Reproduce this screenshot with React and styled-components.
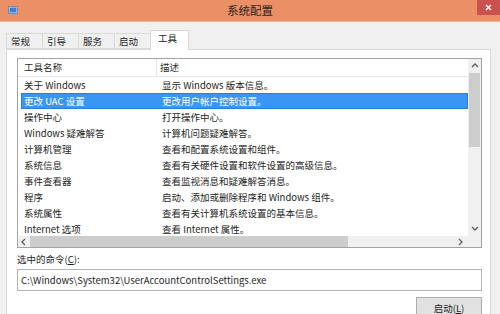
import React from "react";
import styled, { createGlobalStyle } from "styled-components";

const GlobalStyle = createGlobalStyle`
  html, body {
    margin: 0;
    padding: 0;
    background: #f0f0f0;
  }
  body {
    font-family: "Noto Sans CJK SC", "Noto Sans", sans-serif;
    color: #1e1e1e;
  }
`;

const Window = styled.div`
  width: 500px;
  height: 314px;
  overflow: hidden;
  background: #f0f0f0;
  display: flex;
  flex-direction: column;
`;

const TitleBar = styled.div`
  position: relative;
  height: 21px;
  flex: none;
  background: #ea8f66;
  border-bottom: 1px solid #f2b89c;
  display: flex;
  align-items: center;
  justify-content: center;
`;

const AppIcon = styled.svg`
  position: absolute;
  left: 8px;
  top: 6px;
`;

const Title = styled.div`
  font-size: 11.5px;
  color: #2e2420;
  line-height: 21px;
`;

const CloseButton = styled.div`
  position: absolute;
  right: 0;
  top: 0;
  width: 23px;
  height: 15px;
  background: #c9514e;
  display: flex;
  align-items: center;
  justify-content: center;
`;

const Body = styled.div`
  flex: 1;
  display: flex;
  flex-direction: column;
  padding: 8px 9px 0 6px;
  min-height: 0;
`;

const TabStrip = styled.div`
  display: flex;
  align-items: flex-end;
  height: 19px;
  flex: none;
  position: relative;
  z-index: 1;
`;

const Tab = styled.div`
  box-sizing: border-box;
  width: ${({ $active }) => ($active ? "39px" : "37px")};
  height: ${({ $active }) => ($active ? "20px" : "16px")};
  margin-left: ${({ $first }) => ($first ? "0" : "-1px")};
  margin-bottom: ${({ $active }) => ($active ? "-1px" : "0")};
  border: 1px solid #d9d9d9;
  border-bottom: ${({ $active }) => ($active ? "none" : "1px solid #d9d9d9")};
  background: ${({ $active }) => ($active ? "#ffffff" : "#f0f0f0")};
  font-size: 9.5px;
  line-height: ${({ $active }) => ($active ? "15px" : "14px")};
  padding-left: ${({ $active }) => ($active ? "7px" : "4px")};
  color: #1e1e1e;
  position: relative;
  z-index: ${({ $active }) => ($active ? 2 : 1)};
`;

const Panel = styled.div`
  flex: 1;
  background: #ffffff;
  border: 1px solid #d9d9d9;
  padding: 8px 8px 0 10px;
  display: flex;
  flex-direction: column;
`;

const ListView = styled.div`
  box-sizing: border-box;
  height: 190px;
  border: 1px solid #a3a3a3;
  display: grid;
  grid-template-columns: 1fr 13px;
  grid-template-rows: 1fr 11px;
  overflow: hidden;
  flex: none;
`;

const ListContent = styled.div`
  overflow: hidden;
  min-height: 0;
`;

const HeaderRow = styled.div`
  display: flex;
  height: 18px;
  box-sizing: border-box;
  border-bottom: 1px solid #e5e5e5;
  font-size: 9.5px;
  line-height: 17px;
  color: #2e2e2e;
`;

const HeaderCell = styled.div`
  box-sizing: border-box;
  width: ${({ $w }) => $w || "auto"};
  flex: ${({ $w }) => ($w ? "none" : "1")};
  padding-left: ${({ $pl }) => $pl};
  border-right: ${({ $divider }) => ($divider ? "1px solid #e5e5e5" : "none")};
`;

const Row = styled.div`
  display: flex;
  box-sizing: border-box;
  height: 16px;
  margin-left: 3px;
  border: 1px solid ${({ $selected }) => ($selected ? "#2a7fd4" : "transparent")};
  background: ${({ $selected }) => ($selected ? "#3b96f3" : "transparent")};
  color: ${({ $selected }) => ($selected ? "#ffffff" : "#1e1e1e")};
  font-size: 9.5px;
  line-height: 14px;
  white-space: nowrap;
`;

const NameCell = styled.div`
  width: 140px;
  flex: none;
  padding-left: 2px;
  box-sizing: border-box;
`;

const DescCell = styled.div`
  flex: 1;
`;

const VScroll = styled.div`
  background: #f0f0f0;
  display: flex;
  flex-direction: column;
  align-items: center;
`;

const HScroll = styled.div`
  background: #f0f0f0;
  display: flex;
  align-items: center;
`;

const Corner = styled.div`
  background: #f0f0f0;
`;

const ArrowBox = styled.div`
  flex: none;
  width: ${({ $w }) => $w};
  height: ${({ $h }) => $h};
  display: flex;
  align-items: center;
  justify-content: center;
`;

const VThumb = styled.div`
  width: 11px;
  height: 74px;
  background: #cdcdcd;
`;

const HThumb = styled.div`
  width: 318px;
  height: 11px;
  background: #cdcdcd;
`;

const Spacer = styled.div`
  flex: 1;
`;

const FieldLabel = styled.div`
  margin-top: 5px;
  font-size: 9.5px;
  line-height: 12px;
  color: #1e1e1e;

  u {
    text-decoration: underline;
  }
`;

const CommandBox = styled.div`
  box-sizing: border-box;
  margin-top: 4px;
  height: 22px;
  border: 1px solid #b4b4b4;
  background: #ffffff;
  padding-left: 3px;
  font-size: 9.5px;
  line-height: 20px;
  color: #1e1e1e;
  flex: none;
`;

const ButtonRow = styled.div`
  display: flex;
  justify-content: flex-end;
  margin-top: 6px;
`;

const Button = styled.div`
  box-sizing: border-box;
  width: 66px;
  height: 23px;
  border: 1px solid #adadad;
  background: #e1e1e1;
  font-size: 9.5px;
  line-height: 21px;
  text-align: center;
  color: #1e1e1e;
`;

const Chevron = ({ dir }) => {
  const paths = {
    up: "M1 5 L4 2 L7 5",
    down: "M1 2 L4 5 L7 2",
    left: "M5 1 L2 4 L5 7",
    right: "M2 1 L5 4 L2 7",
  };
  return (
    <svg width="8" height="8" viewBox="0 0 8 8">
      <path d={paths[dir]} fill="none" stroke="#606060" strokeWidth="1.3" />
    </svg>
  );
};

const tools = [
  ["关于 Windows", "显示 Windows 版本信息。"],
  ["更改 UAC 设置", "更改用户帐户控制设置。"],
  ["操作中心", "打开操作中心。"],
  ["Windows 疑难解答", "计算机问题疑难解答。"],
  ["计算机管理", "查看和配置系统设置和组件。"],
  ["系统信息", "查看有关硬件设置和软件设置的高级信息。"],
  ["事件查看器", "查看监视消息和疑难解答消息。"],
  ["程序", "启动、添加或删除程序和 Windows 组件。"],
  ["系统属性", "查看有关计算机系统设置的基本信息。"],
  ["Internet 选项", "查看 Internet 属性。"],
];

const tabs = ["常规", "引导", "服务", "启动", "工具"];

export default function App() {
  const selected = 1;

  return (
    <>
      <GlobalStyle />
      <Window>
        <TitleBar>
          <AppIcon width="10" height="10" viewBox="0 0 10 10">
            <rect x="0.5" y="0.5" width="9" height="7" fill="#dfe6ee" stroke="#7b8aa0" />
            <rect x="1.5" y="1.5" width="7" height="5" fill="#3f7fd8" />
            <rect x="3" y="8" width="4" height="1.5" fill="#9aa6b4" />
          </AppIcon>
          <Title>系统配置</Title>
          <CloseButton>
            <svg width="7" height="7" viewBox="0 0 7 7">
              <path d="M1 1 L6 6 M6 1 L1 6" stroke="#ffffff" strokeWidth="1.4" />
            </svg>
          </CloseButton>
        </TitleBar>
        <Body>
          <TabStrip>
            {tabs.map((t, i) => (
              <Tab key={t} $first={i === 0} $active={i === 4}>
                {t}
              </Tab>
            ))}
          </TabStrip>
          <Panel>
            <ListView>
              <ListContent>
                <HeaderRow>
                  <HeaderCell $w="139px" $pl="6px" $divider>
                    工具名称
                  </HeaderCell>
                  <HeaderCell $pl="3px">描述</HeaderCell>
                </HeaderRow>
                {tools.map(([name, desc], i) => (
                  <Row key={name} $selected={i === selected}>
                    <NameCell>{name}</NameCell>
                    <DescCell>{desc}</DescCell>
                  </Row>
                ))}
              </ListContent>
              <VScroll>
                <ArrowBox $w="13px" $h="14px">
                  <Chevron dir="up" />
                </ArrowBox>
                <VThumb />
                <Spacer />
                <ArrowBox $w="13px" $h="14px">
                  <Chevron dir="down" />
                </ArrowBox>
              </VScroll>
              <HScroll>
                <ArrowBox $w="12px" $h="11px">
                  <Chevron dir="left" />
                </ArrowBox>
                <HThumb />
                <Spacer />
                <ArrowBox $w="14px" $h="11px">
                  <Chevron dir="right" />
                </ArrowBox>
              </HScroll>
              <Corner />
            </ListView>
            <FieldLabel>
              选中的命令(<u>C</u>):
            </FieldLabel>
            <CommandBox>C:\Windows\System32\UserAccountControlSettings.exe</CommandBox>
            <ButtonRow>
              <Button>
                启动(<u>L</u>)
              </Button>
            </ButtonRow>
          </Panel>
        </Body>
      </Window>
    </>
  );
}
